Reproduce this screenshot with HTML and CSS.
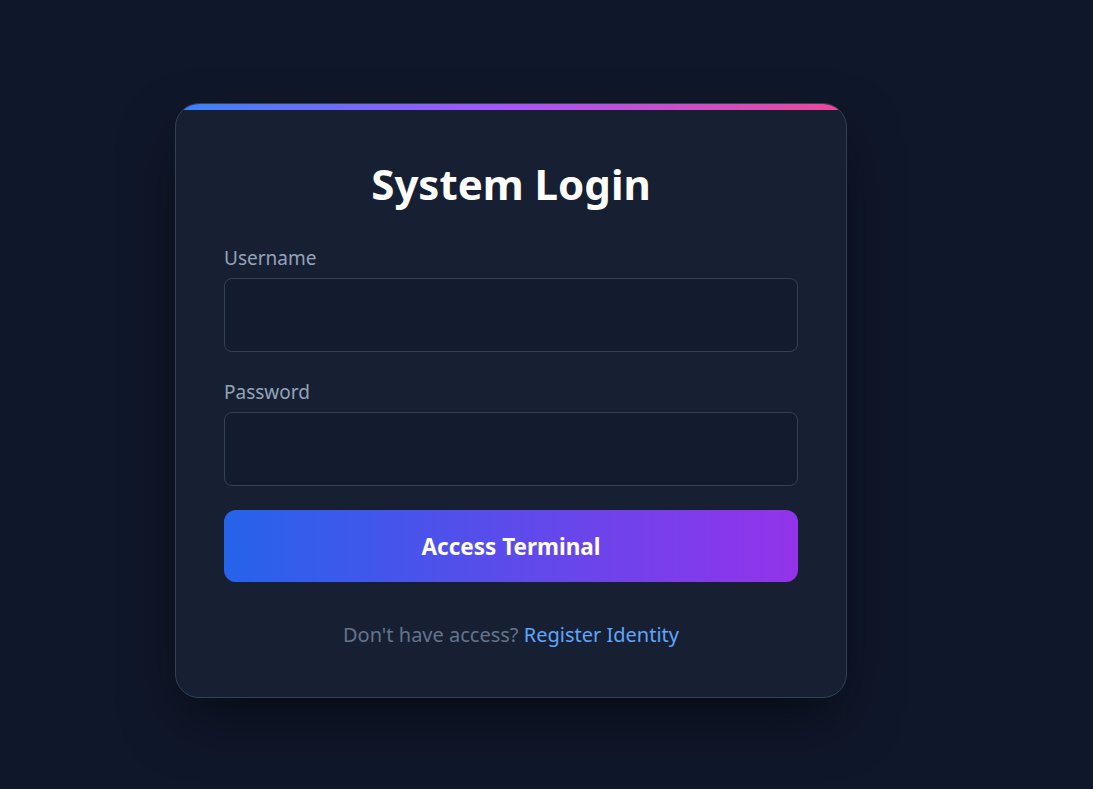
FILE: index.html
```html
<!DOCTYPE html>
<html lang="en">
<head>
<meta charset="utf-8">
<title>System Login</title>
<link rel="stylesheet" href="styles.css">
</head>
<body>
<main class="page">
  <section class="card">
    <h1 class="title">System Login</h1>
    <form class="form">
      <div class="field">
        <label class="label" for="username">Username</label>
        <input class="input" id="username" type="text">
      </div>
      <div class="field">
        <label class="label" for="password">Password</label>
        <input class="input" id="password" type="password">
      </div>
      <button class="button" type="button">Access Terminal</button>
    </form>
    <p class="footer">Don't have access? <a class="link" href="#">Register Identity</a></p>
  </section>
</main>
</body>
</html>
```
FILE: styles.css
```css
* { box-sizing: border-box; }
html, body {
  margin: 0;
  height: 100%;
  background: #0f172a;
}
body {
  font-family: "Noto Sans", "Open Sans", sans-serif;
  color: #f8fafc;
}
.page {
  padding: 103px 0 0 175px;
}
.card {
  position: relative;
  width: 672px;
  background: #172033;
  border: 1px solid #334155;
  border-radius: 24px;
  overflow: hidden;
  padding: 56px 48px 48px;
  box-shadow: 0 25px 60px -10px rgba(0, 0, 0, 0.55);
  display: flex;
  flex-direction: column;
}
.card::before {
  content: "";
  position: absolute;
  top: 0;
  left: 0;
  right: 0;
  height: 6px;
  background: linear-gradient(90deg, #3b82f6, #a855f7, #ec4899);
}
.title {
  margin: 0 0 38px;
  font-size: 42px;
  line-height: 48px;
  font-weight: 700;
  text-align: center;
  color: #ffffff;
}
.form {
  display: flex;
  flex-direction: column;
}
.field {
  display: flex;
  flex-direction: column;
  gap: 8px;
  margin-bottom: 28px;
}
.field + .field { margin-bottom: 24px; }
.label {
  font-size: 19px;
  line-height: 24px;
  color: #94a3b8;
}
.input {
  height: 74px;
  background: #131b2e;
  border: 1px solid #334155;
  border-radius: 8px;
  color: #f8fafc;
  font: inherit;
  padding: 0 16px;
  outline: none;
}
.button {
  height: 72px;
  border: none;
  border-radius: 12px;
  background: linear-gradient(90deg, #2563eb, #9333ea);
  color: #ffffff;
  font-family: inherit;
  font-size: 22.5px;
  font-weight: 700;
  cursor: pointer;
}
.footer {
  margin: 39px 0 0;
  text-align: center;
  font-size: 20px;
  line-height: 28px;
  color: #64748b;
}
.link {
  color: #60a5fa;
  text-decoration: none;
}
```
